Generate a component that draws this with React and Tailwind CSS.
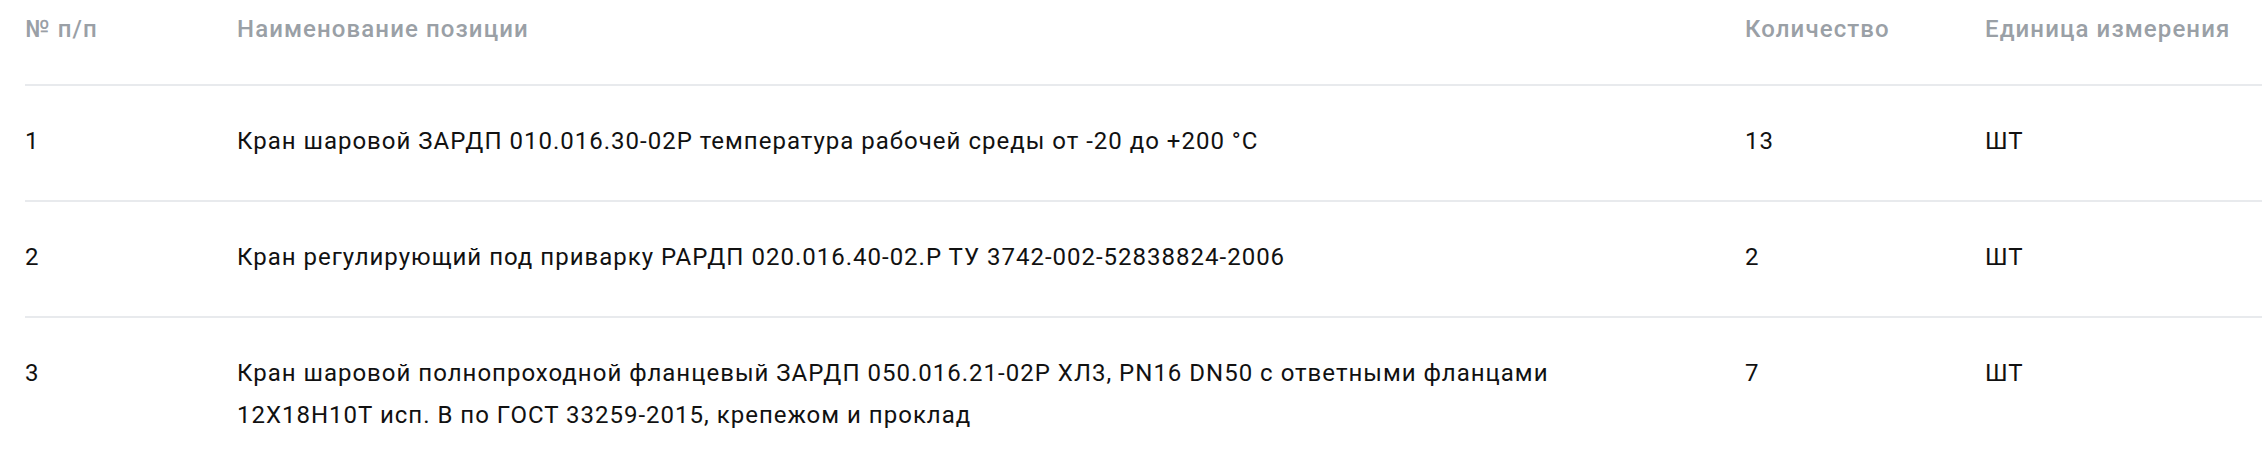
const rows = [
  { n: 1, name: 'Кран шаровой ЗАРДП 010.016.30-02Р температура рабочей среды от -20 до +200 °C', qty: 13, unit: 'ШТ' },
  { n: 2, name: 'Кран регулирующий под приварку РАРДП 020.016.40-02.Р ТУ 3742-002-52838824-2006', qty: 2, unit: 'ШТ' },
  { n: 3, name: 'Кран шаровой полнопроходной фланцевый ЗАРДП 050.016.21-02Р ХЛ3, PN16 DN50 с ответными фланцами 12Х18Н10Т исп. В по ГОСТ 33259-2015, крепежом и проклад', qty: 7, unit: 'ШТ' },
];

const cols = 'grid grid-cols-[212px_1508px_240px_1fr]';

export default function App() {
  return (
    <div className="min-h-screen bg-white pl-[25px] font-['Roboto',sans-serif] text-[24px] leading-[42px] tracking-[1px]">
      <div className={`${cols} border-b-2 border-[#e8eaed] pt-[8px] pb-[34px] font-medium tracking-[1.1px] text-[#9aa0a6]`}>
        <div>№ п/п</div>
        <div>Наименование позиции</div>
        <div>Количество</div>
        <div className="whitespace-nowrap">Единица измерения</div>
      </div>
      {rows.map(r => (
        <div key={r.n} className={`${cols} border-b-2 border-[#e8eaed] pt-[34px] pb-[38px] text-[#111111]`}>
          <div>{r.n}</div>
          <div className="pr-[110px]">{r.name}</div>
          <div>{r.qty}</div>
          <div>{r.unit}</div>
        </div>
      ))}
    </div>
  );
}
